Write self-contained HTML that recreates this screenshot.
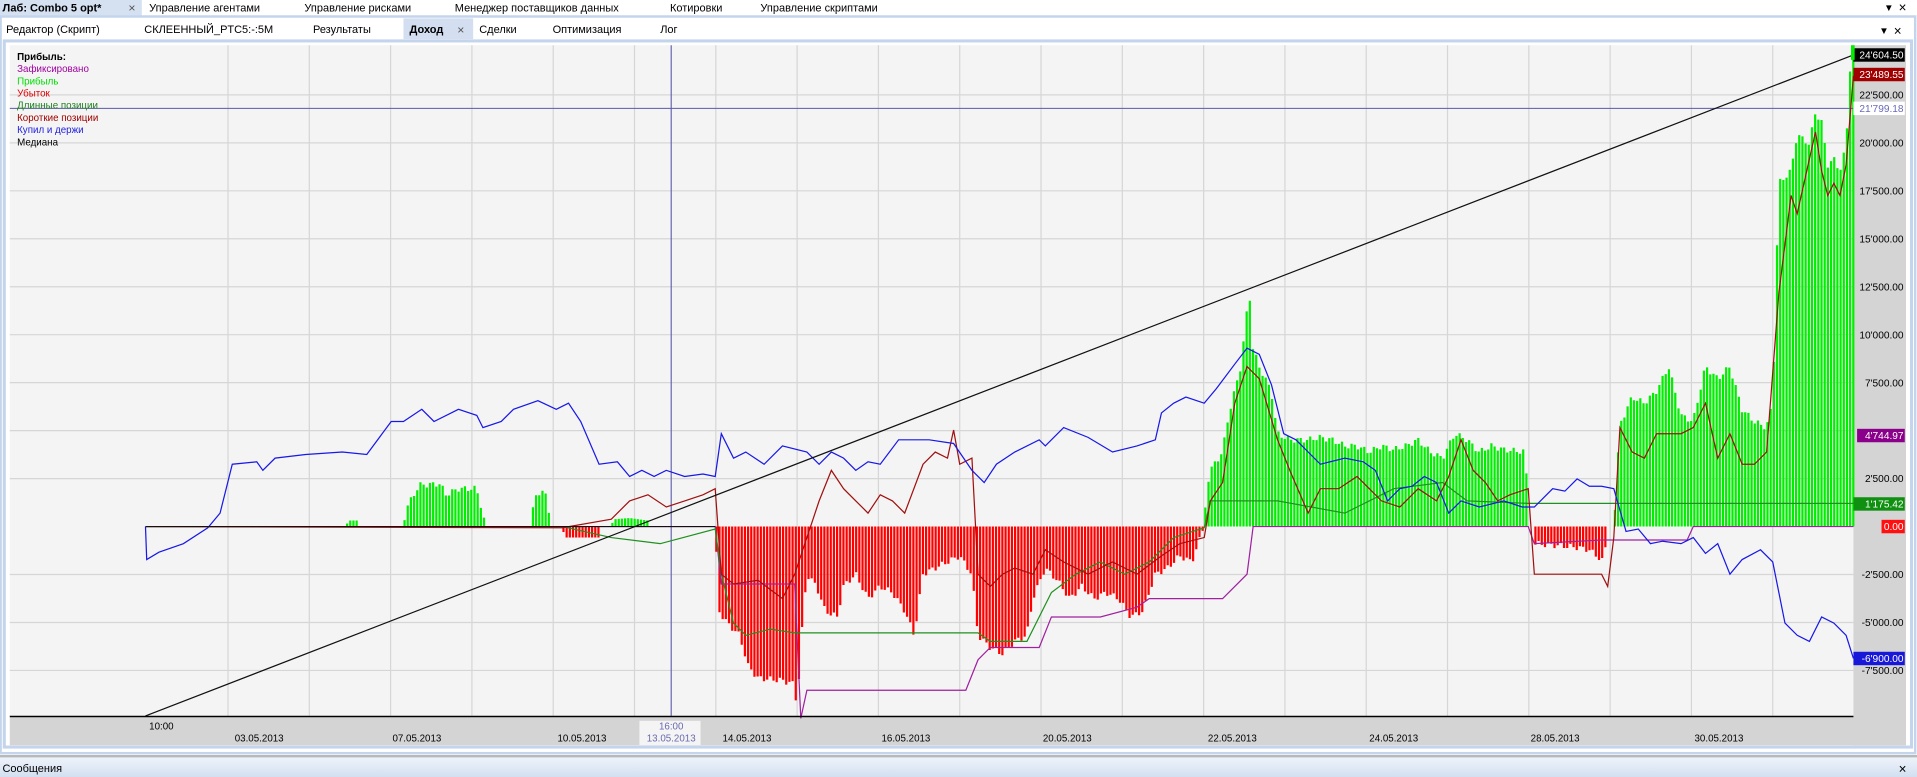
<!DOCTYPE html>
<html><head><meta charset="utf-8"><style>
html,body{margin:0;padding:0;background:#fff;overflow:hidden}
svg{display:block}
text{font-family:"Liberation Sans","DejaVu Sans",sans-serif}
</style></head><body>
<svg id="s" width="1917" height="777" viewBox="0 0 1568 636" preserveAspectRatio="none" xmlns="http://www.w3.org/2000/svg">
<rect width="1568" height="636" fill="#fff"/>
<!-- tab row 1 -->
<rect x="0" y="0" width="116" height="13" fill="#d5e1f1"/>
<g font-size="9" fill="#000">
<text x="2" y="9.5" font-weight="bold">Лаб: Combo 5 opt*</text>
<text x="105" y="10" fill="#555" font-size="10">×</text>
<text x="122" y="9.5">Управление агентами</text>
<text x="249" y="9.5">Управление рисками</text>
<text x="372" y="9.5">Менеджер поставщиков данных</text>
<text x="548" y="9.5">Котировки</text>
<text x="622" y="9.5">Управление скриптами</text>
</g>
<text x="1541" y="9" font-size="8">▼</text><text x="1553" y="10" font-size="11">×</text>
<!-- panel -->
<rect x="0.5" y="13.5" width="1566" height="603" fill="#fff" stroke="#c3d4ec" stroke-width="2"/>
<rect x="330" y="15" width="57" height="17" fill="#d3dff0"/>
<g font-size="9" fill="#000">
<text x="5" y="27">Редактор (Скрипт)</text>
<text x="118" y="27">СКЛЕЕННЫЙ_PTC5:-:5M</text>
<text x="256" y="27">Результаты</text>
<text x="335" y="27" font-weight="bold">Доход</text>
<text x="374" y="28" fill="#555" font-size="10">×</text>
<text x="392" y="27">Сделки</text>
<text x="452" y="27">Оптимизация</text>
<text x="540" y="27">Лог</text>
</g>
<text x="1537" y="28" font-size="8">▼</text><text x="1549" y="29" font-size="11">×</text>
<rect x="3.5" y="33.5" width="1560" height="578" fill="#fff" stroke="#c3d4ec" stroke-width="2.5"/>
<!-- plot -->
<rect x="8" y="37" width="1508" height="549" fill="#f4f4f4"/>
<rect x="1516" y="37" width="43" height="573" fill="#d4d4d4"/>
<rect x="8" y="587" width="1551" height="23" fill="#d4d4d4"/>
<g id="grid" stroke="#d6d6d6" stroke-width="1"></g>
<g id="bars"></g>
<line x1="8" y1="88.7" x2="1516" y2="88.7" stroke="#5a5aa8" stroke-width="0.9"/>
<line x1="549" y1="37" x2="549" y2="586" stroke="#5a5aa8" stroke-width="0.9"/>
<g id="lines" fill="none" stroke-width="1"></g>
<line x1="119" y1="586" x2="1516" y2="45" stroke="#111" stroke-width="1"/>
<line x1="8" y1="586.5" x2="1516" y2="586.5" stroke="#000" stroke-width="1.2"/>
<!-- legend -->
<g font-size="8">
<text x="14" y="49" font-weight="bold">Прибыль:</text>
<text x="14" y="59" fill="#a000a0">Зафиксировано</text>
<text x="14" y="69" fill="#00e000">Прибыль</text>
<text x="14" y="79" fill="#e00000">Убыток</text>
<text x="14" y="89" fill="#208020">Длинные позиции</text>
<text x="14" y="99" fill="#a00000">Короткие позиции</text>
<text x="14" y="109" fill="#2020e0">Купил и держи</text>
<text x="14" y="119">Медиана</text>
</g>
<!-- y labels -->
<g font-size="8.3" text-anchor="end" fill="#000" id="yl"></g>
<!-- x labels -->
<g font-size="8" text-anchor="middle">
<text x="132" y="597">10:00</text>
<text x="212" y="607">03.05.2013</text>
<text x="341" y="607">07.05.2013</text>
<text x="476" y="607">10.05.2013</text>
<rect x="523" y="590" width="50" height="20" fill="#f4f4f4"/>
<text x="549" y="597" fill="#6a6ab0">16:00</text>
<text x="549" y="607" fill="#6a6ab0">13.05.2013</text>
<text x="611" y="607">14.05.2013</text>
<text x="741" y="607">16.05.2013</text>
<text x="873" y="607">20.05.2013</text>
<text x="1008" y="607">22.05.2013</text>
<text x="1140" y="607">24.05.2013</text>
<text x="1272" y="607">28.05.2013</text>
<text x="1406" y="607">30.05.2013</text>
</g>
<!-- messages -->
<defs><linearGradient id="mg" x1="0" y1="0" x2="0" y2="1"><stop offset="0" stop-color="#eef3fa"/><stop offset="1" stop-color="#d3e0f1"/></linearGradient></defs>
<rect x="0" y="618" width="1568" height="2" fill="#b8b8b8"/>
<rect x="0" y="620" width="1568" height="16" fill="url(#mg)"/>
<text x="2" y="632" font-size="9">Сообщения</text>
<text x="1553" y="633" font-size="11">×</text>
</svg>
<script>
var NS="http://www.w3.org/2000/svg";
function el(t,a,p){var e=document.createElementNS(NS,t);for(var k in a)e.setAttribute(k,a[k]);p.appendChild(e);return e;}
var g=document.getElementById('grid');
for(var k=-3;k<=9;k++){var y=431-39.26*k;if(k==0)continue;el('line',{x1:8,x2:1516,y1:y,y2:y},g);}
for(var x=186.5;x<1516;x+=66.5)el('line',{x1:x,x2:x,y1:37,y2:586},g);
function interp(pts,x){for(var i=0;i<pts.length-1;i++){var a=pts[i],b=pts[i+1];if(x>=a[0]&&x<=b[0]){return a[1]+(b[1]-a[1])*(x-a[0])/(b[0]-a[0]);}}return 431;}
var bars=document.getElementById('bars');
function region(pts,col){var x0=pts[0][0],x1=pts[pts.length-1][0];var d='';for(var x=x0;x<x1;x+=2.6){var y=interp(pts,x+1);var j=(Math.sin(x*1.7)*4);if(Math.abs(y-431)>10)y+=(y<431?j:-j)*0.6;var t=Math.min(y,431),h=Math.abs(y-431);d+='M'+x.toFixed(1)+' '+t.toFixed(1)+'h1.8v'+h.toFixed(1)+'h-1.8z';}el('path',{d:d,fill:col},bars);}
region([[283,431],[285,426],[292,426],[294,431]],'#00ee00');
region([[330,431],[333,415],[343,397],[360,396],[365,405],[375,400],[390,400],[395,420],[398,431]],'#00ee00');
region([[435,431],[437,404],[448,404],[450,431]],'#00ee00');
region([[460,431],[462,440],[490,440],[492,431]],'#ff0000');
region([[500,431],[502,425],[515,424],[530,426],[532,431]],'#00ee00');
region([[585,431],[588,500],[595,510],[605,520],[612,545],[620,555],[640,557],[650,560],[652,583],[655,530],[660,470],[668,480],[675,500],[685,505],[690,480],[700,470],[710,490],[720,480],[730,485],[740,500],[748,520],[755,470],[765,465],[775,460],[785,455],[795,470],[800,520],[810,530],[820,535],[830,525],[840,520],[845,490],[855,465],[865,475],[875,490],[885,480],[895,490],[905,485],[915,490],[925,505],[935,500],[945,470],[955,465],[965,455],[975,460],[985,431]],'#ff0000');
region([[985,431],[987,400],[990,385],[1000,370],[1005,340],[1010,320],[1015,300],[1020,255],[1022,238],[1025,285],[1030,300],[1040,320],[1045,355],[1055,360],[1070,360],[1080,358],[1090,360],[1100,365],[1110,365],[1120,370],[1130,365],[1140,368],[1150,365],[1160,360],[1170,370],[1180,375],[1190,355],[1200,360],[1210,370],[1220,365],[1230,368],[1248,370],[1250,431]],'#00ee00');
region([[1255,431],[1256,445],[1290,448],[1300,450],[1312,460],[1315,431]],'#ff0000');
region([[1320,431],[1322,400],[1325,348],[1335,325],[1345,330],[1355,320],[1365,300],[1375,340],[1385,345],[1395,300],[1405,310],[1415,300],[1425,335],[1435,345],[1445,350],[1450,330],[1455,150],[1465,140],[1470,110],[1480,118],[1485,92],[1490,100],[1495,135],[1500,130],[1505,140],[1510,120],[1514,45],[1516,45]],'#00ee00');
var L=document.getElementById('lines');
function pl(p,c){el('polyline',{points:p.map(function(q){return q.join(',')}).join(' '),stroke:c},L);}
pl([[119,431],[585,431],[590,478],[640,478],[650,478],[655,588],[660,565],[790,565],[800,540],[810,530],[850,530],[860,505],[900,505],[930,497],[940,490],[1000,490],[1020,470],[1025,431],[1250,431],[1255,445],[1310,442],[1380,442],[1385,431],[1516,431]],'#a020a0');
pl([[119,431],[460,431],[500,440],[540,445],[585,433],[590,470],[600,510],[610,520],[630,515],[650,518],[800,518],[810,525],[840,525],[860,485],[880,470],[900,460],[920,470],[940,460],[960,440],[985,432],[990,410],[1045,410],[1100,420],[1140,400],[1180,395],[1200,410],[1250,412],[1516,412]],'#209020');
pl([[119,431],[460,432],[500,425],[515,410],[530,405],[545,415],[560,410],[575,405],[585,400],[590,470],[600,478],[620,475],[640,490],[650,470],[660,440],[670,410],[680,385],[690,400],[700,410],[710,420],[720,405],[730,410],[740,420],[755,380],[765,370],[775,375],[780,352],[785,380],[795,375],[800,470],[810,480],[820,470],[830,465],[845,470],[855,450],[870,460],[890,470],[910,460],[930,470],[950,455],[965,445],[985,440],[990,410],[1000,395],[1010,330],[1020,300],[1030,310],[1045,360],[1055,385],[1070,420],[1080,400],[1095,400],[1110,390],[1120,400],[1130,410],[1145,415],[1160,400],[1175,410],[1185,390],[1195,360],[1205,385],[1215,395],[1225,410],[1235,405],[1250,400],[1255,470],[1310,470],[1315,480],[1320,440],[1325,350],[1335,370],[1345,375],[1355,355],[1365,355],[1375,355],[1385,350],[1395,330],[1405,375],[1415,355],[1425,380],[1435,380],[1445,370],[1455,240],[1465,160],[1470,175],[1480,130],[1485,108],[1490,140],[1495,160],[1500,150],[1505,160],[1510,135],[1516,62]],'#a01010');
pl([[119,431],[120,458],[130,452],[150,445],[170,432],[180,420],[190,380],[210,378],[215,385],[225,375],[250,372],[280,370],[300,372],[320,345],[330,345],[345,335],[355,345],[375,335],[390,340],[395,350],[410,345],[420,335],[440,328],[455,335],[465,330],[475,345],[490,380],[505,378],[515,390],[525,385],[535,390],[545,385],[560,390],[575,388],[585,390],[590,355],[600,375],[610,370],[625,380],[640,365],[660,370],[670,380],[680,370],[690,375],[700,385],[710,378],[720,380],[735,360],[760,360],[780,363],[795,385],[805,395],[815,380],[830,370],[850,360],[855,365],[870,350],[890,358],[910,370],[930,365],[945,360],[950,338],[960,330],[970,325],[985,330],[995,318],[1010,298],[1020,285],[1030,290],[1040,315],[1050,355],[1060,360],[1080,380],[1100,375],[1115,378],[1125,385],[1135,410],[1145,400],[1155,398],[1165,390],[1175,395],[1185,420],[1195,410],[1210,415],[1230,410],[1245,415],[1255,415],[1270,400],[1280,402],[1290,392],[1300,398],[1310,398],[1320,400],[1330,435],[1340,433],[1350,445],[1360,443],[1375,445],[1385,440],[1395,453],[1405,445],[1415,470],[1425,458],[1440,450],[1450,460],[1460,510],[1470,520],[1480,525],[1490,505],[1500,510],[1510,520],[1516,539]],'#1818e8');
el('line',{x1:119,y1:431,x2:585,y2:431,stroke:'#111','stroke-width':1},L);
var yl=document.getElementById('yl');
var labs=[[22500,"22'500.00"],[20000,"20'000.00"],[17500,"17'500.00"],[15000,"15'000.00"],[12500,"12'500.00"],[10000,"10'000.00"],[7500,"7'500.00"],[2500,"2'500.00"],[-2500,"-2'500.00"],[-5000,"-5'000.00"],[-7500,"-7'500.00"]];
labs.forEach(function(l){var y=431-l[0]/2500*39.26;var t=el('text',{x:1557,y:y+3},yl);t.textContent=l[1];});
var tags=[[45,"24'604.50","#000","#fff",1516],[61,"23'489.55","#a00000","#fff",1516],[88.7,"21'799.18","#fff","#6a6ab8",1516],[356.5,"4'744.97","#8b008b","#fff",1519],[412.5,"1'175.42","#109010","#fff",1516],[431,"0.00","#ff1010","#fff",1539],[539,"-6'900.00","#1818d8","#fff",1516]];
tags.forEach(function(l){el('rect',{x:l[4],y:l[0]-5.5,width:1558-l[4],height:11,fill:l[2]},yl);var t=el('text',{x:1557,y:l[0]+3,fill:l[3]},yl);t.textContent=l[1];});
el('rect',{x:1514,y:37,width:3,height:12,fill:'#00ee00'},yl);
</script>
</body></html>
